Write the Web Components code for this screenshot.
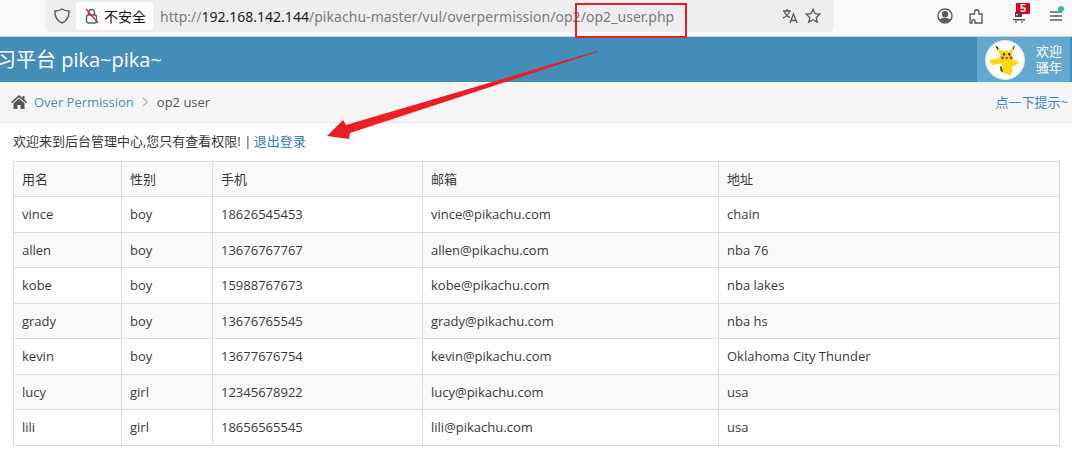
<!DOCTYPE html>
<html lang="zh">
<head>
<meta charset="utf-8">
<title>op2 user</title>
<style>
html, body { margin: 0; padding: 0; background: #fff; }
body { width: 1072px; height: 464px; overflow: hidden; position: relative; font-family: "Open Sans", "Noto Sans CJK SC", sans-serif; }
</style>
</head>
<body>
<browser-bar></browser-bar>
<site-header>习平台 pika~pika~</site-header>
<bread-crumb></bread-crumb>
<user-panel>
    <a slot="logout" href="#">退出登录</a>
</user-panel>
<red-marks></red-marks>

<script>
class BrowserBar extends HTMLElement {
    constructor() {
        super();
        this.attachShadow({ mode: 'open' });
    }
    connectedCallback() {
        this.render();
    }
    render() {
        this.shadowRoot.innerHTML = `
        <style>
            :host {
                display: flex;
                height: 36px;
                background: #f9f9fb;
                border-bottom: 1px solid #cfcfd8;
                font-family: "Noto Sans", "Noto Sans CJK SC", sans-serif;
            }
            .url {
                margin-left: 45px;
                width: 789px;
                height: 32px;
                background: #eeeef1;
                border-radius: 0 0 6px 6px;
                display: flex;
                align-items: center;
                box-sizing: border-box;
                padding-left: 9px;
            }
            .secure {
                margin-left: 6px;
                width: 77px;
                height: 28px;
                background: #fff;
                border-radius: 4px;
                display: flex;
                align-items: center;
                gap: 5px;
                box-sizing: border-box;
                padding-left: 9px;
                font-size: 14px;
                color: #15141a;
            }
            .addr {
                margin-left: 7px;
                font-size: 14px;
                color: #7a7a80;
                white-space: nowrap;
                flex: 1;
            }
            .addr b { font-weight: 400; color: #1b1b20; }
            .addr i { font-style: normal; letter-spacing: 0.05px; }
            .right { display: flex; gap: 7px; margin-right: 13px; align-items: center; }
            .tools { display: flex; align-items: center; flex: 1; height: 32px; }
            svg { display: block; flex: none; fill: none; stroke: #5b5b66; stroke-width: 1.4; }
            .account { margin-left: 103px; }
            .puzzle { margin-left: 15px; }
            .ext { margin-left: 28px; position: relative; width: 14px; height: 24px; flex: none; }
            .ext svg { position: absolute; left: 0; top: 5px; stroke: none; background: #fff; }
            .badge {
                position: absolute;
                left: 4px;
                top: -1px;
                width: 14px;
                height: 11px;
                background: #d70022;
                color: #fff;
                font: 700 11px/11px "Liberation Sans", sans-serif;
                text-align: center;
                border-radius: 1px;
            }
            .menu { margin-left: 23px; position: relative; flex: none; }
            .dot {
                position: absolute;
                left: 9px;
                top: -5px;
                width: 6px;
                height: 6px;
                border-radius: 50%;
                background: #2ac3a2;
            }
        </style>
        <div class="url">
            <svg width="16" height="16" viewBox="0 0 16 16"><path d="M8 1 C10 2.400 12.500 3 15 3 C15.300 8.500 13 12.800 8 15 C3 12.800 .7 8.500 1 3 C3.500 3 6 2.400 8 1 Z"/></svg>
            <div class="secure">
                <svg width="14" height="16" viewBox="0 0 14 16"><rect x="1.500" y="7" width="10" height="8" rx="2"/><path d="M3.500 7 V4.500 a3 3 0 0 1 6 0 V7"/><path d="M1 1 L13 15" style="stroke:#e22850;stroke-width:1.500"/></svg>
                <span>不安全</span>
            </div>
            <div class="addr">http://<b>192.168.142.144</b><i>/pikachu-master/vul/overpermission/op2/op2_user.php</i></div>
            <div class="right">
                <svg width="16" height="16" viewBox="0 0 16 16"><path d="M1 3 H9 M5 1 V3 M7.500 3 C7 6 4.500 8.500 1 10 M2.500 3.500 C3.500 6.500 5.500 8.500 8 9.500"/><path d="M8 15 L11.500 6 L15 15 M9.200 12.500 H13.800"/></svg>
                <svg width="16" height="16" viewBox="0 0 16 16"><path d="M8 1.300 L10 5.700 L14.800 6.200 L11.200 9.400 L12.200 14.200 L8 11.700 L3.800 14.200 L4.800 9.400 L1.200 6.200 L6 5.700 Z"/></svg>
            </div>
        </div>
        <div class="tools">
            <svg class="account" width="16" height="16" viewBox="0 0 16 16"><circle cx="8" cy="8" r="7"/><circle cx="8" cy="6.300" r="2.500" style="fill:#5b5b66"/><path d="M3.500 12 C5 9.800 11 9.800 12.500 12 C11 14.300 5 14.300 3.500 12 Z" style="fill:#5b5b66"/></svg>
            <svg class="puzzle" width="16" height="16" viewBox="0 0 16 16"><path d="M1 6 H5.500 V4 a2.200 2.200 0 0 1 4.400 0 V6 H13 V15 H6 V12.500 a1.600 1.600 0 0 0 -3 0 V15 H1 Z" transform="translate(1 0)"/></svg>
            <div class="ext">
                <svg width="14" height="14" viewBox="0 0 14 14"><path d="M3 3 H10 V8 H3 Z" fill="#444"/><circle cx="5" cy="5.500" r="1" fill="#ddd"/><path d="M1 10 H13 V11.500 H1 Z" fill="#555"/><path d="M3 12 H5 V14 H3 Z M9 12 H11 V14 H9 Z" fill="#999"/></svg>
                <span class="badge">5</span>
            </div>
            <div class="menu">
                <svg width="14" height="10" viewBox="0 0 14 10"><path d="M1 1 H13 M1 5 H13 M1 9 H13"/></svg>
                <span class="dot"></span>
            </div>
        </div>`;
    }
}

class SiteHeader extends HTMLElement {
    constructor() {
        super();
        this.attachShadow({ mode: 'open' });
    }
    connectedCallback() {
        this.render();
    }
    render() {
        this.shadowRoot.innerHTML = `
        <style>
            :host {
                display: flex;
                height: 45px;
                background: #438eb9;
                color: #fff;
                overflow: hidden;
                align-items: stretch;
            }
            .title {
                flex: 1;
                margin-left: -4px;
                font: 20px/45px "Open Sans", "Noto Sans CJK SC", sans-serif;
                white-space: nowrap;
            }
            .user {
                width: 93px;
                background: #62a8d1;
                border-right: 2px solid #438eb9;
                display: flex;
                align-items: center;
            }
            .avatar {
                margin-left: 8px;
                width: 38px;
                height: 38px;
                border-radius: 50%;
                background: #fff;
                border: 1px solid #d5e6f0;
                flex: none;
            }
            .avatar svg { display: block; }
            .name {
                margin-left: 11px;
                font: 13px/16px "Liberation Sans", "Noto Sans CJK SC", sans-serif;
            }
        </style>
        <div class="title"><slot></slot></div>
        <div class="user">
            <div class="avatar">
                <svg width="38" height="38" viewBox="0 0 38 38">
                    <path d="M9 4.300 L14 8 L16 11 L13.500 12.500 Z" fill="#fbd80f"/>
                    <path d="M29 4.300 L25.500 8 L23 11 L25.500 12.500 Z" fill="#fbd80f"/>
                    <path d="M9 4.300 L12.500 6.800 L11.500 9 Z M29 4.300 L26.500 6.800 L27.500 9 Z" fill="#2a2a1a"/>
                    <path d="M14 11 C17 9 22 9 25.500 11 L27.300 20 L33.300 19.300 L30.700 23.300 L26 26 L26 31 L24 35.300 L22 33 L18 32.700 L15.700 27.700 L15.500 22 L6.700 24.300 L3.300 19.300 L13.500 17 Z" fill="#fbd80f"/>
                    <path d="M14 25 L15.800 26 L17 31.500 L14.500 30 Z" fill="#5b4b20"/>
                    <circle cx="18" cy="13.300" r="1.200" fill="#222"/>
                    <circle cx="23.300" cy="13.300" r="1.200" fill="#222"/>
                    <circle cx="16.500" cy="16.700" r="1.500" fill="#d8392b"/>
                    <circle cx="25" cy="16.700" r="1.500" fill="#d8392b"/>
                    <path d="M19.500 16 h2.600 l-1.300 3.200 z" fill="#b6342a"/>
                </svg>
            </div>
            <div class="name"><div>欢迎</div><div>骚年</div></div>
        </div>`;
    }
}

class BreadCrumb extends HTMLElement {
    constructor() {
        super();
        this.attachShadow({ mode: 'open' });
    }
    connectedCallback() {
        this.render();
    }
    render() {
        this.shadowRoot.innerHTML = `
        <style>
            :host {
                display: flex;
                height: 41px;
                box-sizing: border-box;
                background: #f5f5f5;
                border-bottom: 1px solid #e5e5e5;
                align-items: center;
                padding: 0 4px 0 11px;
                font: 13px "Open Sans", "Noto Sans CJK SC", sans-serif;
                color: #555;
            }
            svg { display: block; flex: none; }
            a { color: #4c8fbd; text-decoration: none; }
            .crumb { margin-left: 7px; }
            .sep { margin: 0 8px; }
            .tip { margin-left: auto; margin-bottom: 2px; color: #3a87c5; }
        </style>
        <svg width="16" height="14" viewBox="0 0 16 14"><path d="M8 0 L11.500 3 V1 H13.500 V4.800 L16 7 L15 8.200 L8 2.300 L1 8.200 L0 7 Z" fill="#585858"/><path d="M8 3.500 L13.500 8.200 V14 H9.500 V10 H6.500 V14 H2.500 V8.200 Z" fill="#585858"/></svg>
        <a class="crumb" href="#">Over Permission</a>
        <svg class="sep" width="7" height="10" viewBox="0 0 7 10"><path d="M1 1 L5.500 5 L1 9" fill="none" stroke="#b2b6bf" stroke-width="1.200"/></svg>
        <span>op2 user</span>
        <a class="tip" href="#">点一下提示~</a>`;
    }
}

const USERS = [
    ['vince', 'boy', '18626545453', 'vince@pikachu.com', 'chain'],
    ['allen', 'boy', '13676767767', 'allen@pikachu.com', 'nba 76'],
    ['kobe', 'boy', '15988767673', 'kobe@pikachu.com', 'nba lakes'],
    ['grady', 'boy', '13676765545', 'grady@pikachu.com', 'nba hs'],
    ['kevin', 'boy', '13677676754', 'kevin@pikachu.com', 'Oklahoma City Thunder'],
    ['lucy', 'girl', '12345678922', 'lucy@pikachu.com', 'usa'],
    ['lili', 'girl', '18656565545', 'lili@pikachu.com', 'usa']
];

class UserPanel extends HTMLElement {
    constructor() {
        super();
        this.attachShadow({ mode: 'open' });
    }
    connectedCallback() {
        this.render();
    }
    render() {
        const rows = USERS.map(u => '<div class="row">' + u.map(c => `<span>${c}</span>`).join('') + '</div>').join('');
        this.shadowRoot.innerHTML = `
        <style>
            :host {
                display: block;
                padding: 9px 12px 0 13px;
                font: 13px "Open Sans", "Noto Sans CJK SC", sans-serif;
                color: #393939;
            }
            .msg { height: 28.500px; line-height: 18px; }
            ::slotted(a) { color: #337ab7; text-decoration: none; margin-left: -1px; }
            .grid { border-bottom: 1px solid #ddd; border-right: 1px solid #ddd; }
            .row {
                display: grid;
                grid-template-columns: 108px 91px 210px 296px 341px;
                height: 35.500px;
            }
            .row:nth-child(odd) { background: #f9f9f9; }
            .row span {
                border-left: 1px solid #ddd;
                border-top: 1px solid #ddd;
                padding-left: 8px;
                line-height: 35px;
                white-space: nowrap;
            }
        </style>
        <div class="msg">欢迎来到后台管理中心,您只有查看权限! | <slot name="logout"></slot></div>
        <div class="grid">
            <div class="row"><span>用名</span><span>性别</span><span>手机</span><span>邮箱</span><span>地址</span></div>
            ${rows}
        </div>`;
    }
}

class RedMarks extends HTMLElement {
    constructor() {
        super();
        this.attachShadow({ mode: 'open' });
    }
    connectedCallback() {
        this.render();
    }
    render() {
        this.shadowRoot.innerHTML = `
        <style>
            :host { position: absolute; left: 0; top: 0; width: 1072px; height: 464px; pointer-events: none; }
            svg { display: block; }
        </style>
        <svg width="1072" height="464" viewBox="0 0 1072 464">
            <rect x="576" y="4" width="110" height="33" fill="none" stroke="#ee1c25" stroke-width="2"/>
            <path d="M597 51 L346 125 L343 120 L327 136 L349 139 L350 133 L597 52 Z" fill="#ee1c25"/>
        </svg>`;
    }
}

customElements.define('browser-bar', BrowserBar);
customElements.define('site-header', SiteHeader);
customElements.define('bread-crumb', BreadCrumb);
customElements.define('user-panel', UserPanel);
customElements.define('red-marks', RedMarks);
</script>
</body>
</html>
